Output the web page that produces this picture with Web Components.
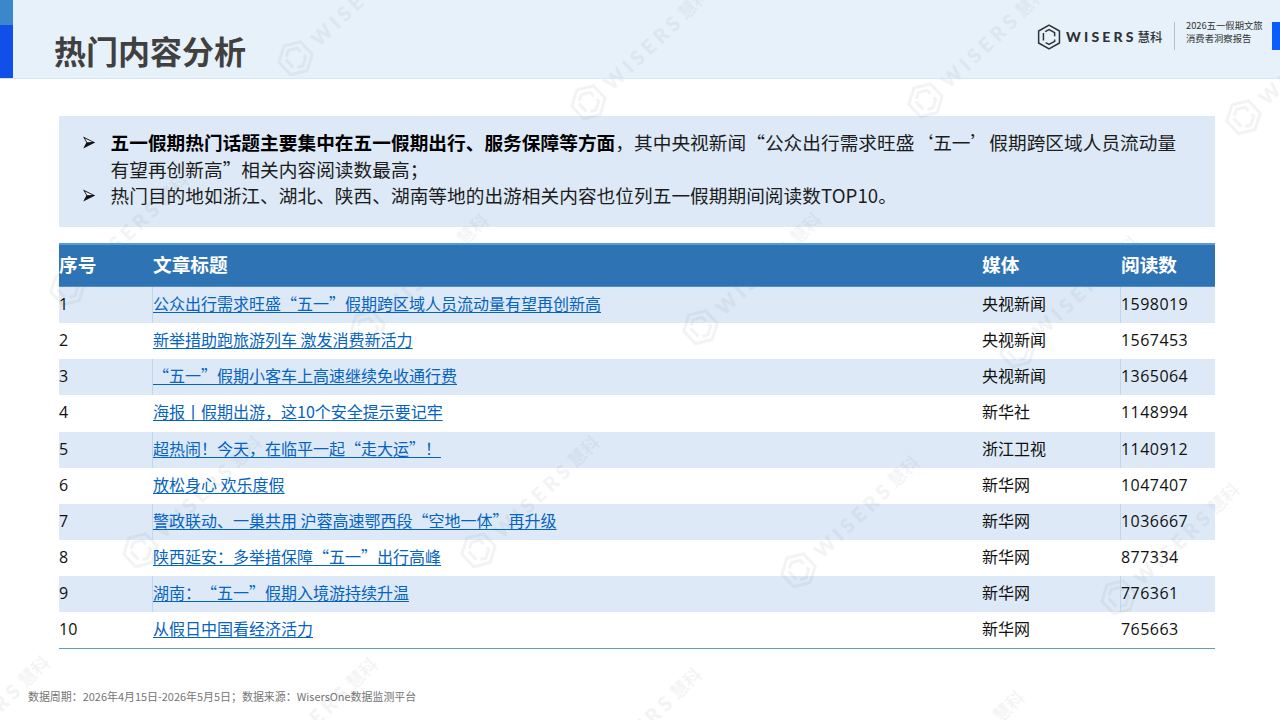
<!DOCTYPE html>
<html lang="zh-CN">
<head>
<meta charset="utf-8">
<title>热门内容分析</title>
<style>
html,body{margin:0;padding:0;background:#fff}
body{font-family:"Noto Sans CJK SC","Noto Sans",sans-serif}
</style>
</head>
<body>
<report-page>
  <wm-mark x="295" y="58"></wm-mark><wm-mark x="588" y="102"></wm-mark><wm-mark x="925" y="100"></wm-mark><wm-mark x="1243" y="117"></wm-mark>
  <wm-mark x="67" y="288"></wm-mark><wm-mark x="367" y="328"></wm-mark><wm-mark x="700" y="327"></wm-mark><wm-mark x="1017" y="350"></wm-mark>
  <wm-mark x="140" y="550"></wm-mark><wm-mark x="478" y="550"></wm-mark><wm-mark x="798" y="570"></wm-mark><wm-mark x="1118" y="597"></wm-mark>
  <wm-mark x="-72" y="770"></wm-mark><wm-mark x="256" y="772"></wm-mark><wm-mark x="580" y="782"></wm-mark><wm-mark x="903" y="805"></wm-mark>

  <page-header slot="header" side-a="2026五一假期文旅" side-b="消费者洞察报告">热门内容分析</page-header>

  <call-out>
    <bullet-item><b>五一假期热门话题主要集中在五一假期出行、服务保障等方面</b>，其中央视新闻“公众出行需求旺盛‘五一’假期跨区域人员流动量有望再创新高”相关内容阅读数最高；</bullet-item>
    <bullet-item>热门目的地如浙江、湖北、陕西、湖南等地的出游相关内容也位列五一假期期间阅读数TOP10。</bullet-item>
  </call-out>

  <data-table>
    <data-row shaded n="1" media="央视新闻" reads="1598019">公众出行需求旺盛“五一”假期跨区域人员流动量有望再创新高</data-row>
    <data-row n="2" media="央视新闻" reads="1567453">新举措助跑旅游列车 激发消费新活力</data-row>
    <data-row shaded n="3" media="央视新闻" reads="1365064">“五一”假期小客车上高速继续免收通行费</data-row>
    <data-row n="4" media="新华社" reads="1148994">海报丨假期出游，这10个安全提示要记牢</data-row>
    <data-row shaded n="5" media="浙江卫视" reads="1140912">超热闹！今天，在临平一起“走大运”！</data-row>
    <data-row n="6" media="新华网" reads="1047407">放松身心 欢乐度假</data-row>
    <data-row shaded n="7" media="新华网" reads="1036667">警政联动、一巢共用 沪蓉高速鄂西段“空地一体”再升级</data-row>
    <data-row n="8" media="新华网" reads="877334">陕西延安：多举措保障“五一”出行高峰</data-row>
    <data-row shaded n="9" media="新华网" reads="776361">湖南：“五一”假期入境游持续升温</data-row>
    <data-row n="10" media="新华网" reads="765663">从假日中国看经济活力</data-row>
  </data-table>

  <span slot="footer">数据周期：2026年4月15日-2026年5月5日；数据来源：WisersOne数据监测平台</span>
</report-page>

<script>
const CJK = '"Noto Sans CJK SC","Noto Sans",sans-serif';
const HEX = `<svg viewBox="0 0 24 26" fill="none" stroke="currentColor" stroke-linejoin="round" aria-hidden="true">
  <path d="M12 1.2 22.4 7v12L12 24.8 1.6 19V7Z"/>
  <path d="M8.2 7.6 12 5.6l5.6 3.1v3.6M17.6 15.4v2l-5.6 3-3.4-1.8M6.4 16.6V8.9"/>
</svg>`;

class BaseEl extends HTMLElement {
  render(html){ this.attachShadow({mode:'open'}).innerHTML = html; }
}

class WisersLogo extends BaseEl {
  constructor(){ super(); this.render(`<style>
    :host{display:inline-flex;align-items:center;font-size:14px;color:inherit;white-space:nowrap}
    svg{width:1.72em;height:1.86em;flex:none}
    svg path{stroke-width:var(--hx,1.5)}
    .w{font:900 1em/1 Lato,Inter,sans-serif;letter-spacing:.225em;margin-left:.36em}
    .k{font:500 .89em/1 ${CJK};margin-left:.08em}
  </style>${HEX}<span class="w">WISERS</span><span class="k">慧科</span>`); }
}
customElements.define('wisers-logo', WisersLogo);

class WmMark extends BaseEl {
  constructor(){ super(); this.render(`<style>
    :host{display:block;position:absolute;left:calc(var(--x) - 17px);top:calc(var(--y) - 18px);
      transform-origin:17px 18px;transform:rotate(-43.5deg);color:#5a6670;opacity:.07;white-space:nowrap;pointer-events:none;--hx:2.1}
    wisers-logo{font-size:20px}
  </style><wisers-logo></wisers-logo>`); }
  connectedCallback(){
    this.style.setProperty('--x', this.getAttribute('x')+'px');
    this.style.setProperty('--y', this.getAttribute('y')+'px');
  }
}
customElements.define('wm-mark', WmMark);

class ReportPage extends BaseEl {
  constructor(){ super(); this.render(`<style>
    :host{display:flex;flex-direction:column;position:relative;width:1280px;height:720px;overflow:hidden;background:#fff;font-family:${CJK};color:#111;text-spacing-trim:space-all}
    .layer{position:absolute;inset:0;z-index:0}
    .front{position:relative;z-index:1;display:flex;flex-direction:column;flex:1}
    main{padding:37px 65px 0 59px;display:flex;flex-direction:column;gap:16px}
    footer{margin-top:auto;padding:0 0 16px 28px;font-size:10.95px;line-height:16px;color:#757575}
  </style>
  <div class="layer"><slot></slot></div>
  <div class="front">
    <slot name="header"></slot>
    <main><slot name="body"></slot></main>
    <footer><slot name="footer"></slot></footer>
  </div>`); }
  connectedCallback(){
    for(const el of this.children){
      if(el.localName==='call-out'||el.localName==='data-table') el.slot='body';
    }
  }
}
customElements.define('report-page', ReportPage);

class PageHeader extends BaseEl {
  constructor(){ super(); this.render(`<style>
    :host{display:flex;height:79px;box-sizing:border-box;background:rgba(23,115,205,.1);border-bottom:1px solid #d6e5f8}
    .tabs{width:13px;display:flex;flex-direction:column;flex:none}
    .tabs i{display:block;height:25px;background:#3b87cb}
    .tabs b{display:block;flex:1;background:#1150e8}
    h1{margin:33.5px 0 0 41px;font:700 32px/32px ${CJK};color:#404040}
    .right{margin:22px 0 0 auto;height:28px;display:flex;align-items:center;width:243px;flex:none}
    wisers-logo{color:#2f3238;width:126px;flex:none;position:relative;top:1px}
    .div{width:1px;height:28px;background:#b9bcc0;margin:0 11px;flex:none}
    .side{font:400 9.33px/13.3px ${CJK};color:#333;white-space:nowrap;align-self:flex-start;margin-top:-3px}
    .side div{display:block}
    .blue{width:8px;height:28px;background:#0a5cff;margin-left:auto;flex:none}
  </style>
  <div class="tabs"><i></i><b></b></div>
  <h1><slot></slot></h1>
  <div class="right">
    <wisers-logo></wisers-logo><span class="div"></span>
    <div class="side"><div id="a"></div><div id="b"></div></div>
    <span class="blue"></span>
  </div>`); }
  connectedCallback(){
    this.shadowRoot.getElementById('a').textContent=this.getAttribute('side-a');
    this.shadowRoot.getElementById('b').textContent=this.getAttribute('side-b');
  }
}
customElements.define('page-header', PageHeader);

class CallOut extends BaseEl {
  constructor(){ super(); this.render(`<style>
    :host{display:block;height:111px;box-sizing:border-box;padding:13px 30px 0 23px;background:rgba(40,112,195,.155)}
  </style><slot></slot>`); }
}
customElements.define('call-out', CallOut);

class BulletItem extends BaseEl {
  constructor(){ super(); this.render(`<style>
    :host{display:flex;font-size:18.67px;line-height:26.6px;color:#1c1c1c;letter-spacing:.04px}
    .m{width:28.5px;flex:none;display:flex;align-items:flex-start;padding-top:7px;box-sizing:border-box;height:26.6px}
    svg{width:14px;height:13px}
    .t{flex:1}
    ::slotted(b){font-weight:700;color:#000}
  </style>
  <span class="m"><svg viewBox="0 0 14 13" aria-hidden="true">
    <path d="M1 .6 13.2 6.4 1.2 12.4 4.4 6.6Z" fill="#111"/>
    <path d="M3 2.4 10.4 6 5.2 6.2Z" fill="#eef3f9"/>
  </svg></span>
  <span class="t"><slot></slot></span>`); }
}
customElements.define('bullet-item', BulletItem);

const COLS = 'grid-template-columns:93px 830px 138px 95px;';
class DataTable extends BaseEl {
  constructor(){ super(); this.render(`<style>
    :host{display:block;border-bottom:1px solid #5b9bd5}
    .head{display:grid;${COLS}height:44px;box-sizing:border-box;align-items:center;background:#2e74b5;padding-bottom:2px;
      border-top:2px solid #5b9bd5;border-bottom:1px solid #4f90cc;color:#fff;font:700 18.67px/1 ${CJK}}
    .head span:nth-child(2){padding-left:1px}
    .head span:nth-child(4){padding-left:1px}
  </style>
  <div class="head"><span>序号</span><span>文章标题</span><span>媒体</span><span>阅读数</span></div>
  <slot></slot>`); }
}
customElements.define('data-table', DataTable);

class DataRow extends BaseEl {
  constructor(){ super(); this.render(`<style>
    :host{display:grid;${COLS}height:36.15px;align-items:center;font-size:16px;line-height:22px;color:#111}
    :host([shaded]){background:rgba(40,112,195,.155)}
    .c{height:100%;display:flex;align-items:center;box-sizing:border-box;border-left:1px solid transparent;padding-bottom:4px}
    :host([shaded]) .line{border-left-color:#c0d6ec}
    .c0,.c2{border-left:0}
    .c0,.c3{padding-bottom:2px}
    a{color:#0563c1;text-decoration:underline;text-underline-offset:2px}
    .num{font-family:"Open Sans",${CJK};}
    .c3 .num{letter-spacing:.45px}
  </style>
  <div class="c c0"><span class="num" id="n"></span></div>
  <div class="c line"><a href="#"><slot></slot></a></div>
  <div class="c c2"><span id="m"></span></div>
  <div class="c c3 line"><span class="num" id="r"></span></div>`); }
  connectedCallback(){
    const s=this.shadowRoot;
    s.getElementById('n').textContent=this.getAttribute('n');
    s.getElementById('m').textContent=this.getAttribute('media');
    s.getElementById('r').textContent=this.getAttribute('reads');
  }
}
customElements.define('data-row', DataRow);
</script>
</body>
</html>
